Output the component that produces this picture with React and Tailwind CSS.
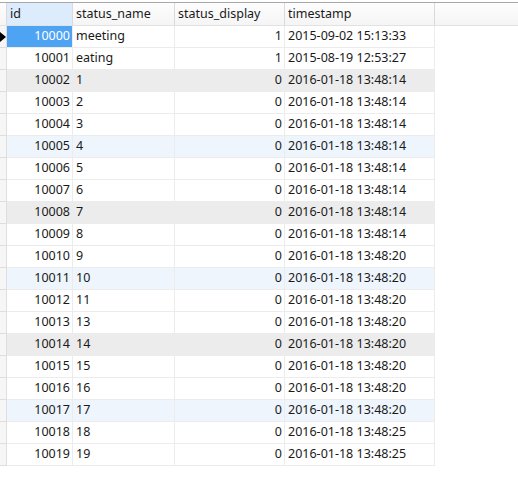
const rows = [
  ["10000", "meeting", "1", "2015-09-02 15:13:33"],
  ["10001", "eating", "1", "2015-08-19 12:53:27"],
  ["10002", "1", "0", "2016-01-18 13:48:14"],
  ["10003", "2", "0", "2016-01-18 13:48:14"],
  ["10004", "3", "0", "2016-01-18 13:48:14"],
  ["10005", "4", "0", "2016-01-18 13:48:14"],
  ["10006", "5", "0", "2016-01-18 13:48:14"],
  ["10007", "6", "0", "2016-01-18 13:48:14"],
  ["10008", "7", "0", "2016-01-18 13:48:14"],
  ["10009", "8", "0", "2016-01-18 13:48:14"],
  ["10010", "9", "0", "2016-01-18 13:48:20"],
  ["10011", "10", "0", "2016-01-18 13:48:20"],
  ["10012", "11", "0", "2016-01-18 13:48:20"],
  ["10013", "13", "0", "2016-01-18 13:48:20"],
  ["10014", "14", "0", "2016-01-18 13:48:20"],
  ["10015", "15", "0", "2016-01-18 13:48:20"],
  ["10016", "16", "0", "2016-01-18 13:48:20"],
  ["10017", "17", "0", "2016-01-18 13:48:20"],
  ["10018", "18", "0", "2016-01-18 13:48:25"],
  ["10019", "19", "0", "2016-01-18 13:48:25"],
];

function rowBg(i) {
  if (i % 6 === 2) return "bg-[#ececec]";
  if (i % 6 === 5) return "bg-[#eef5fd]";
  return "bg-white";
}

export default function App() {
  return (
    <div
      className="w-[518px] h-[491px] bg-white text-[12.5px] text-[#1a1a1a] overflow-hidden"
      style={{ fontFamily: '"Noto Sans", "Liberation Sans", sans-serif' }}
    >
      <div className="h-[2px] bg-white" />
      <div className="border-t border-[#a8a8a8]">
        {/* Header */}
        <div className="flex h-[23px] bg-gradient-to-b from-[#fdfdfd] to-[#f5f5f5] border-b border-[#e2e2e2]">
          <div className="w-[7px] border-r border-[#dadada]" />
          <div className="w-[66px] pl-[3px] flex items-center border-r border-[#dadada] bg-[#dcecfc]">id</div>
          <div className="w-[102px] pl-[3px] flex items-center border-r border-[#dadada]">status_name</div>
          <div className="w-[110px] pl-[3px] flex items-center border-r border-[#dadada]">status_display</div>
          <div className="w-[150px] pl-[3px] flex items-center border-r border-[#dadada]">timestamp</div>
        </div>
        {rows.map((r, i) => (
          <div key={r[0]} className="flex h-[22px]">
            <div className="w-[7px] border-r border-b border-[#dedede] bg-[#f6f6f6] flex items-center">
              {i === 0 && (
                <svg width="6" height="10" viewBox="0 0 6 10" className="block">
                  <path d="M0 0 L6 5 L0 10 Z" fill="#000" />
                </svg>
              )}
            </div>
            <div
              className={`w-[66px] pr-[2px] flex items-center justify-end border-r border-b border-[#ececec] ${
                i === 0 ? "bg-[#4ea3f2] text-white" : rowBg(i)
              }`}
            >
              {r[0]}
            </div>
            <div className={`w-[102px] pl-[3px] flex items-center border-r border-b border-[#ececec] ${rowBg(i)}`}>
              {r[1]}
            </div>
            <div className={`w-[110px] pr-[2px] flex items-center justify-end border-r border-b border-[#ececec] ${rowBg(i)}`}>
              {r[2]}
            </div>
            <div className={`w-[150px] pl-[3px] flex items-center border-r border-b border-[#ececec] ${rowBg(i)}`}>
              {r[3]}
            </div>
          </div>
        ))}
      </div>
    </div>
  );
}
